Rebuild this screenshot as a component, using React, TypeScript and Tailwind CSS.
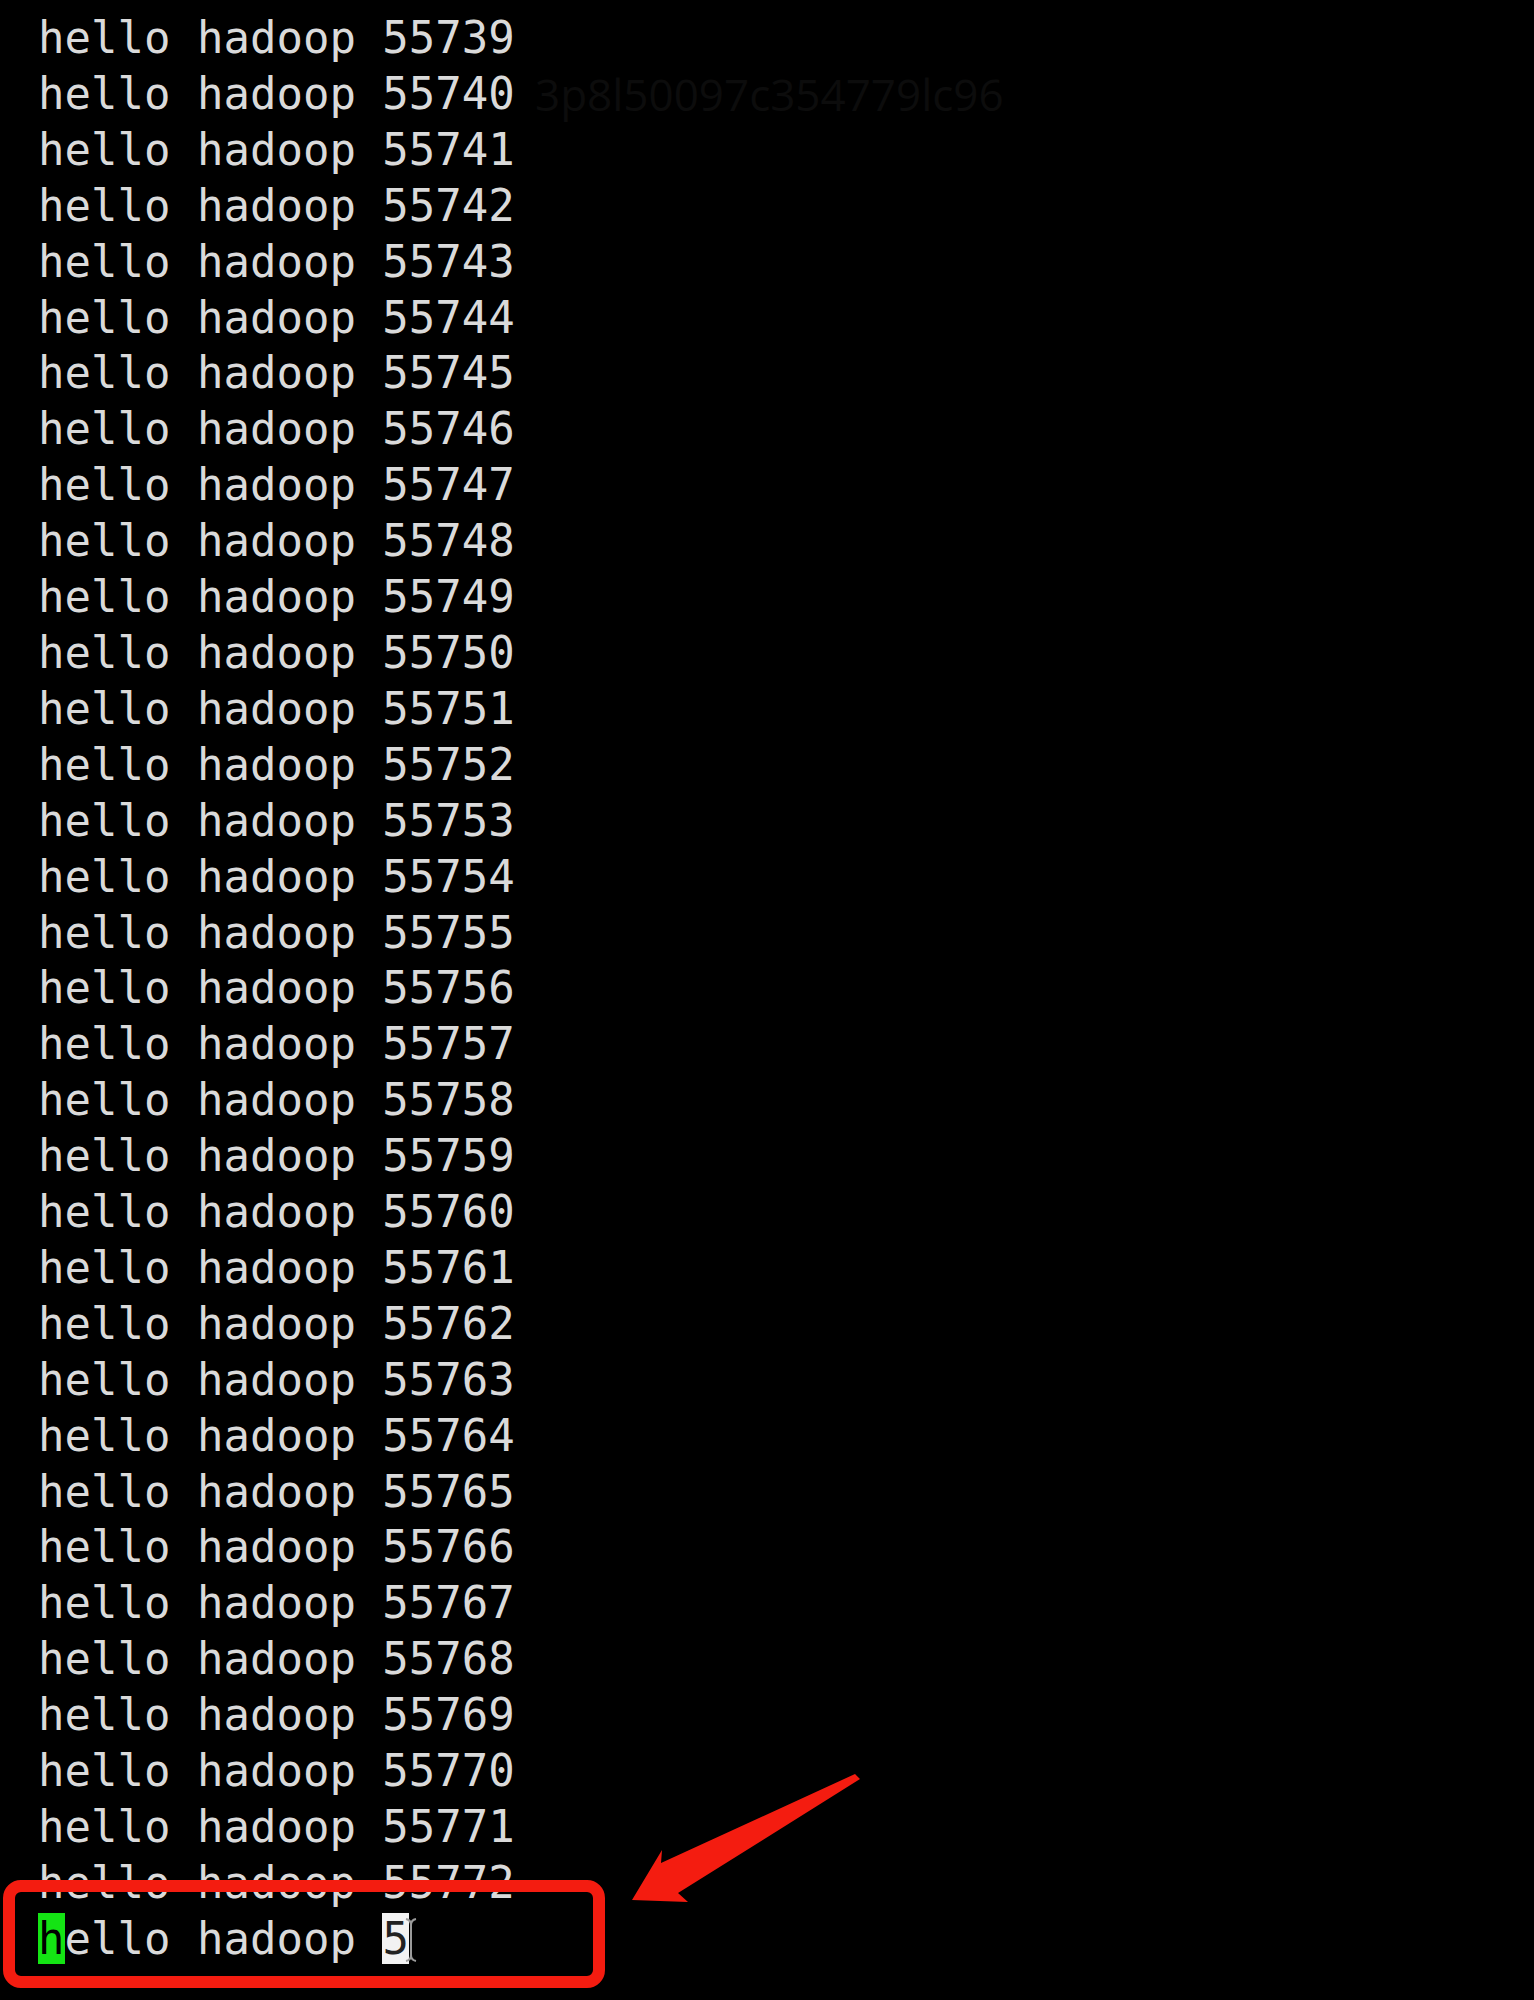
import React from "react";

const mono = { fontFamily: '"DejaVu Sans Mono", "Liberation Mono", monospace' };

const lines = Array.from({ length: 34 }, (_, i) => `hello hadoop ${55739 + i}`);

function IBeam() {
  return (
    <svg width="14" height="46" viewBox="0 0 14 46" className="absolute left-[404px] top-[1917px]">
      <path d="M2 2 Q7 3 7 8 L7 38 Q7 43 2 44 M12 2 Q7 3 7 8 M7 38 Q7 43 12 44" stroke="#9a9a9a" strokeWidth="2" fill="none" />
    </svg>
  );
}

function Arrow() {
  return (
    <svg width="300" height="180" viewBox="0 0 300 180" className="absolute left-[600px] top-[1750px]">
      <polygon points="32,150 62,100 61,113 255,24 260,29 78,143 88,152" fill="#f41c10" />
    </svg>
  );
}

export default function App() {
  return (
    <div className="relative h-[2000px] w-full overflow-hidden bg-black">
      {/* faint watermark behind the terminal output */}
      <span
        className="absolute left-[535px] top-[72px] text-[44px] leading-none text-[#0c0c0c]"
        style={{ fontFamily: '"Open Sans", "Noto Sans", sans-serif' }}
      >
        3p8l50097c354779lc96
      </span>

      <div className="relative flex flex-col pl-[38px] pt-[10px] text-[44px] leading-[55.9px] text-[#dadada] whitespace-pre" style={mono}>
        {lines.map((l) => (
          <div key={l}>{l}</div>
        ))}
        <div>
          <span className="bg-[#14e414] text-black">h</span>
          {"ello hadoop "}
          <span className="bg-[#f2f2f2] text-[#222]">5</span>
        </div>
      </div>

      <IBeam />

      {/* annotation */}
      <div className="absolute left-[3px] top-[1880px] h-[108px] w-[602px] rounded-[18px] border-[12px] border-[#f41c10]" />
      <Arrow />
    </div>
  );
}
